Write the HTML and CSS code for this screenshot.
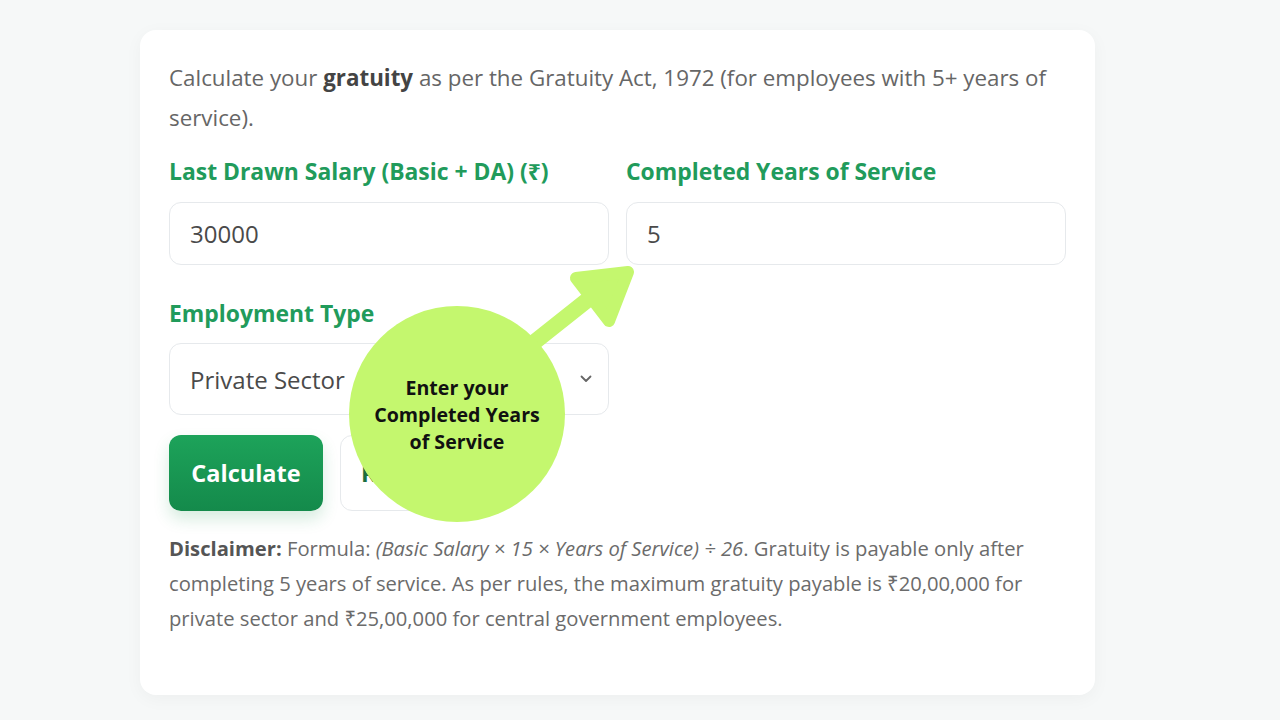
FILE: index.html
```html
<!DOCTYPE html>
<html lang="en">
<head>
<meta charset="utf-8">
<title>Gratuity Calculator</title>
<link rel="stylesheet" href="styles.css">
</head>
<body>
<main class="card">
  <p class="intro">Calculate your <strong>gratuity</strong> as per the Gratuity Act, 1972 (for employees with 5+ years of service).</p>
  <div class="form-grid">
    <div class="field">
      <label class="label" for="salary">Last Drawn Salary (Basic + DA) (₹)</label>
      <div class="input">30000</div>
    </div>
    <div class="field">
      <label class="label" for="years">Completed Years of Service</label>
      <div class="input">5</div>
    </div>
    <div class="field">
      <label class="label" for="type">Employment Type</label>
      <div class="input select">
        <span>Private Sector</span>
        <svg class="chev" width="12" height="8" viewBox="0 0 12 8"><path d="M1.5 1.5 L6 6 L10.5 1.5" fill="none" stroke="#666" stroke-width="1.8" stroke-linecap="round" stroke-linejoin="round"/></svg>
      </div>
    </div>
  </div>
  <div class="actions">
    <button class="btn btn-primary">Calculate</button>
    <button class="btn btn-secondary">Reset</button>
  </div>
  <p class="disclaimer"><strong>Disclaimer:</strong> Formula: <em>(Basic Salary × 15 × Years of Service) ÷ 26</em>. Gratuity is payable only after completing 5 years of service. As per rules, the maximum gratuity payable is ₹20,00,000 for private sector and ₹25,00,000 for central government employees.</p>

  <svg class="arrow" width="140" height="120" viewBox="0 0 140 120">
    <line x1="10" y1="92" x2="78" y2="38" stroke="#c4f76e" stroke-width="16" stroke-linecap="round"/>
    <polygon points="54,26 106,20 87,69" fill="#c4f76e" stroke="#c4f76e" stroke-width="12" stroke-linejoin="round"/>
  </svg>
  <div class="bubble">Enter your Completed Years of Service</div>
</main>
</body>
</html>
```

FILE: styles.css
```css
* { box-sizing: border-box; }

html, body {
  margin: 0;
  padding: 0;
}

body {
  background: #f6f8f8;
  font-family: "Open Sans", "Noto Sans", sans-serif;
  color: #666;
  padding: 30px 0 0 140px;
  height: 720px;
  overflow: hidden;
}

.card {
  position: relative;
  width: 955px;
  height: 665px;
  background: #ffffff;
  border-radius: 16px;
  box-shadow: 0 4px 18px rgba(0, 0, 0, 0.04);
  padding: 28px 29px 0 29px;
}

.intro {
  margin: 0;
  font-size: 22.35px;
  line-height: 40px;
  color: #666;
}

.intro strong {
  color: #444;
  font-weight: 700;
}

.form-grid {
  display: grid;
  grid-template-columns: 440px 440px;
  column-gap: 17px;
  row-gap: 34px;
  margin-top: 19px;
}

.field {
  display: flex;
  flex-direction: column;
  gap: 15px;
}

.field:nth-child(3) {
  gap: 14px;
}

.label {
  font-size: 22.9px;
  line-height: 30px;
  font-weight: 700;
  color: #219b5b;
}

.input {
  height: 63px;
  border: 1px solid #e6e9ec;
  border-radius: 12px;
  padding: 0 20px;
  display: flex;
  align-items: center;
  font-size: 24px;
  color: #4a4a4a;
  background: #fff;
}

.select {
  height: 72px;
  justify-content: space-between;
  padding-right: 16px;
}

.chev {
  display: block;
}

.actions {
  display: flex;
  gap: 17px;
  margin-top: 20px;
}

.btn {
  height: 76px;
  border-radius: 12px;
  font-family: "Open Sans", "Noto Sans", sans-serif;
  font-size: 23.5px;
  font-weight: 700;
  padding: 0 22px;
  cursor: pointer;
  text-align: left;
}

.btn-primary {
  width: 154px;
  border: none;
  color: #fff;
  text-align: center;
  background: linear-gradient(180deg, #1da35a 0%, #148a4b 100%);
  box-shadow: 0 8px 16px rgba(25, 150, 80, 0.18);
}

.btn-secondary {
  width: 130px;
  border: 1px solid #e6e9ec;
  background: #fff;
  color: #1b6e40;
  padding-left: 20px;
}

.disclaimer {
  margin: 20px 0 0 0;
  font-size: 20.2px;
  line-height: 35px;
  color: #6b6b6b;
}

.disclaimer strong {
  color: #555;
  font-weight: 700;
}

.arrow {
  position: absolute;
  left: 382px;
  top: 222px;
}

.bubble {
  position: absolute;
  left: 209px;
  top: 276px;
  width: 216px;
  height: 216px;
  border-radius: 50%;
  background: #c4f76e;
  display: flex;
  align-items: center;
  justify-content: center;
  text-align: center;
  padding: 0 16px;
  font-family: "Open Sans", "Noto Sans", sans-serif;
  font-weight: 700;
  font-size: 19.6px;
  line-height: 27px;
  color: #111;
}
```
